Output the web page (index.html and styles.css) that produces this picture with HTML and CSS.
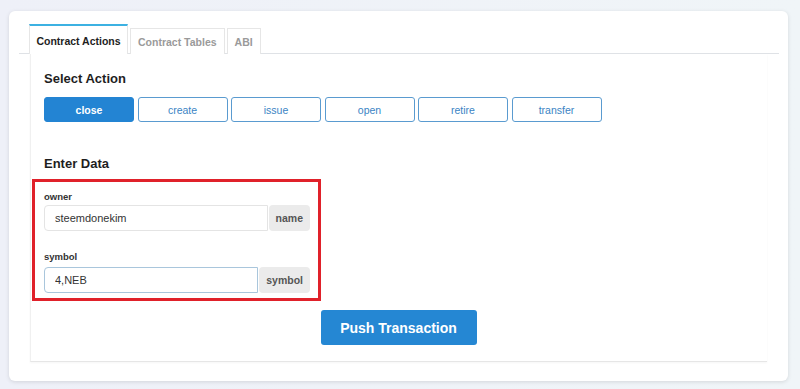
FILE: index.html
```html
<!DOCTYPE html>
<html lang="en">
<head>
  <meta charset="UTF-8">
  <title>Contract Actions</title>
  <link rel="stylesheet" href="styles.css">
</head>
<body>

  <div class="card">
    <div class="tabs">
      <div class="tab active">Contract Actions</div>
      <div class="tab">Contract Tables</div>
      <div class="tab">ABI</div>
    </div>

    <div class="panel">
      <h3>Select Action</h3>
      <div class="actions">
        <button class="action selected">close</button>
        <button class="action">create</button>
        <button class="action">issue</button>
        <button class="action">open</button>
        <button class="action">retire</button>
        <button class="action">transfer</button>
      </div>

      <h3 class="data-title">Enter Data</h3>
      <div class="fields">
        <label>owner</label>
        <div class="input-group">
          <input type="text" value="steemdonekim">
          <span class="addon">name</span>
        </div>

        <label class="second">symbol</label>
        <div class="input-group focused">
          <input type="text" value="4,NEB">
          <span class="addon">symbol</span>
        </div>
      </div>

      <div class="push-row">
        <button class="push">Push Transaction</button>
      </div>
    </div>
  </div>

</body>
</html>
```

FILE: styles.css
```css
body {
  margin: 0;
  padding: 11px 12px 8px 9px;
  font-family: 'Liberation Sans', Arial, sans-serif;
  background: linear-gradient(90deg, #eef0f8, #f0f5f8);
  color: #222;
}

.card {
  background-color: #ffffff;
  border-radius: 6px;
  box-shadow: 0 1px 4px rgba(0,0,0,0.12);
  padding: 13px 9px 21px 10px;
  height: 370px;
  box-sizing: border-box;
}

.tabs {
  display: flex;
  align-items: flex-end;
  gap: 2px;
  padding-left: 10px;
  border-bottom: 1px solid #dfe2e6;
  height: 29px;
}

.tab {
  font-size: 10.5px;
  font-weight: bold;
  color: #9a9a9a;
  padding: 0 7px;
  height: 26px;
  line-height: 26px;
  border: 1px solid #e6e6e6;
  border-bottom: none;
  box-sizing: border-box;
  margin-bottom: -1px;
  background: #fff;
}

.tab.active {
  color: #1e1e1e;
  height: 30px;
  line-height: 30px;
  border-top: 2px solid #3cb1e2;
  border-left: 1px solid #e6e6e6;
  border-right: 1px solid #e6e6e6;
  width: 99px;
  text-align: center;
  padding: 0;
}

.panel {
  margin: 0 12px 0 11px;
  border-left: 1px solid #f0f0f0;
  border-bottom: 1px solid #e6e6e6;
  box-shadow: 0 1px 2px rgba(0,0,0,0.04);
  padding: 17px 14px 16px 13px;
}

h3 {
  font-size: 13px;
  line-height: 16px;
  margin: 0 0 10px 0;
  color: #1e1e1e;
}

.actions {
  display: flex;
  gap: 3.5px;
}

.action {
  width: 90px;
  height: 25px;
  font-family: 'Liberation Sans', Arial, sans-serif;
  font-size: 10.5px;
  color: #3a84c4;
  background: #fff;
  border: 1px solid #5a9bd0;
  border-radius: 3px;
  padding: 0;
}

.action.selected {
  background-color: #2384d3;
  border-color: #2384d3;
  color: #fff;
  font-weight: bold;
}

.data-title {
  margin-top: 34px;
  margin-bottom: 7px;
}

.fields {
  width: 289px;
  margin-left: -12px;
  border: 3px solid #e0212a;
  box-sizing: border-box;
  padding: 9px 8px 5px 9px;
}

label {
  display: block;
  font-size: 9.5px;
  font-weight: bold;
  line-height: 12px;
  color: #333;
  margin-bottom: 2px;
}

label.second {
  margin-top: 20px;
  margin-bottom: 4px;
}

.input-group {
  display: flex;
  height: 26px;
}

.input-group input {
  flex: 1;
  min-width: 0;
  border: 1px solid #e4e4e4;
  border-radius: 4px 0 0 4px;
  padding: 0 10px;
  font-family: 'Liberation Sans', Arial, sans-serif;
  font-size: 11px;
  color: #333;
  outline: none;
}

.input-group.focused input {
  border-color: #a9c6dc;
}

.addon {
  background-color: #ebebeb;
  border-radius: 4px;
  padding: 0 7px;
  font-size: 10.5px;
  font-weight: bold;
  line-height: 26px;
  color: #555;
  margin-left: 1px;
}

.push-row {
  display: flex;
  justify-content: center;
  margin-top: 9px;
}

.push {
  width: 156px;
  height: 35px;
  background-color: #2587d3;
  color: #fff;
  border: none;
  border-radius: 3px;
  font-family: 'Liberation Sans', Arial, sans-serif;
  font-size: 14px;
  font-weight: bold;
}
```
